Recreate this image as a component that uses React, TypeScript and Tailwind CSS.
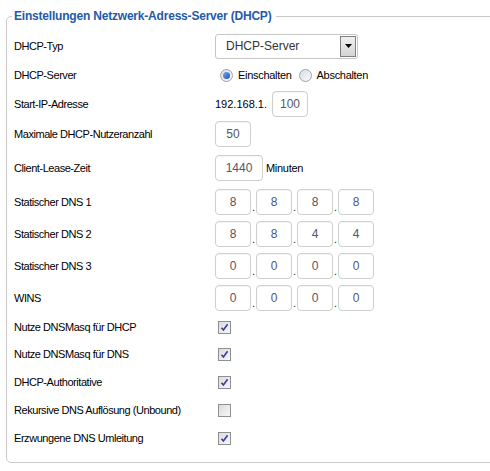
import React from 'react';

const font = { fontFamily: '"Liberation Sans", Arial, sans-serif' };

function Box({ value, w = 'w-[36px]' }: { value: string; w?: string }) {
  return (
    <div
      className={`${w} h-[26px] flex items-center justify-center rounded-[4px] border border-[#cfcfcf] bg-white text-[12px] text-[#525866] shadow-[inset_0_1px_1px_rgba(0,0,0,0.04)]`}
    >
      {value}
    </div>
  );
}

function IpRow({ parts }: { parts: string[] }) {
  return (
    <div className="flex items-center">
      {parts.map((p, i) => (
        <React.Fragment key={i}>
          {i > 0 && <span className="w-[5px] text-center text-[11px] leading-none text-[#2a1f4a] translate-y-[5px]">.</span>}
          <Box value={p} />
        </React.Fragment>
      ))}
    </div>
  );
}

function Checkbox({ checked }: { checked: boolean }) {
  return (
    <span className="ml-[3px] flex h-[13px] w-[13px] items-center justify-center border border-[#8e8f8f] bg-gradient-to-br from-[#dcdcdc] to-[#f7f7f7]">
      {checked && (
        <svg width="9" height="9" viewBox="0 0 9 9">
          <path d="M1.5 4.8 L3.4 7 L7.6 1.2" fill="none" stroke="#3a3aa8" strokeWidth="1.6" />
        </svg>
      )}
    </span>
  );
}

function Radio({ checked }: { checked: boolean }) {
  return (
    <span className="flex h-[13px] w-[13px] items-center justify-center rounded-full border border-[#9aa3ad] bg-gradient-to-br from-[#d8dde2] to-[#fafafa]">
      {checked && <span className="h-[7px] w-[7px] rounded-full bg-gradient-to-br from-[#7aa6f0] to-[#1f4fb8]" />}
    </span>
  );
}

function Row({ label, h, children }: { label: string; h: string; children?: React.ReactNode }) {
  return (
    <div className={`flex items-center ${h}`}>
      <div className="w-[201px] shrink-0 text-[11px] tracking-[-0.45px] text-black">{label}</div>
      <div className="flex items-center">{children}</div>
    </div>
  );
}

export default function App() {
  return (
    <div className="h-[471px] w-[490px] overflow-hidden bg-white pl-[6px] pt-[7px]" style={font}>
      <fieldset className="h-[456px] w-[494px] rounded-[5px] border border-[#c9c9c9] pl-[7px] pt-[7px]">
        <legend className="-ml-[2px] pl-[2px] pr-[5px] text-[12px] font-bold tracking-[-0.2px] text-[#245aa8]">
          Einstellungen Netzwerk-Adress-Server (DHCP)
        </legend>
        <Row label="DHCP-Typ" h="h-[28px]">
          <div className="flex h-[25px] w-[143px] items-center rounded-[3px] border border-[#c6c6c6] bg-white pl-[10px]">
            <span className="flex-1 text-[12px] text-[#333]">DHCP-Server</span>
            <span className="mr-[1px] flex h-[21px] w-[16px] items-center justify-center border border-[#7f7f7f] bg-gradient-to-b from-[#f0f0f0] to-[#d4d4d4]">
              <svg width="7" height="4" viewBox="0 0 7 4">
                <path d="M0 0 H7 L3.5 4 Z" fill="#000" />
              </svg>
            </span>
          </div>
        </Row>
        <Row label="DHCP-Server" h="h-[30px]">
          <div className="flex items-center gap-[5px] pl-[5px] text-[11px] tracking-[-0.3px]">
            <Radio checked />
            <span className="mr-[2px]">Einschalten</span>
            <Radio checked={false} />
            <span>Abschalten</span>
          </div>
        </Row>
        <Row label="Start-IP-Adresse" h="h-[28px]">
          <span className="mr-[5px] text-[11px]">192.168.1.</span>
          <Box value="100" />
        </Row>
        <Row label="Maximale DHCP-Nutzeranzahl" h="h-[32px]">
          <Box value="50" />
        </Row>
        <Row label="Client-Lease-Zeit" h="h-[36px]">
          <Box value="1440" w="w-[48px]" />
          <span className="ml-[3px] text-[11px] tracking-[-0.3px]">Minuten</span>
        </Row>
        <Row label="Statischer DNS 1" h="h-[32px]">
          <IpRow parts={['8', '8', '8', '8']} />
        </Row>
        <Row label="Statischer DNS 2" h="h-[32px]">
          <IpRow parts={['8', '8', '4', '4']} />
        </Row>
        <Row label="Statischer DNS 3" h="h-[32px]">
          <IpRow parts={['0', '0', '0', '0']} />
        </Row>
        <Row label="WINS" h="h-[32px]">
          <IpRow parts={['0', '0', '0', '0']} />
        </Row>
        <Row label="Nutze DNSMasq für DHCP" h="h-[26px]">
          <Checkbox checked />
        </Row>
        <Row label="Nutze DNSMasq für DNS" h="h-[28px]">
          <Checkbox checked />
        </Row>
        <Row label="DHCP-Authoritative" h="h-[28px]">
          <Checkbox checked />
        </Row>
        <Row label="Rekursive DNS Auflösung (Unbound)" h="h-[28px]">
          <Checkbox checked={false} />
        </Row>
        <Row label="Erzwungene DNS Umleitung" h="h-[28px]">
          <Checkbox checked />
        </Row>
      </fieldset>
    </div>
  );
}
